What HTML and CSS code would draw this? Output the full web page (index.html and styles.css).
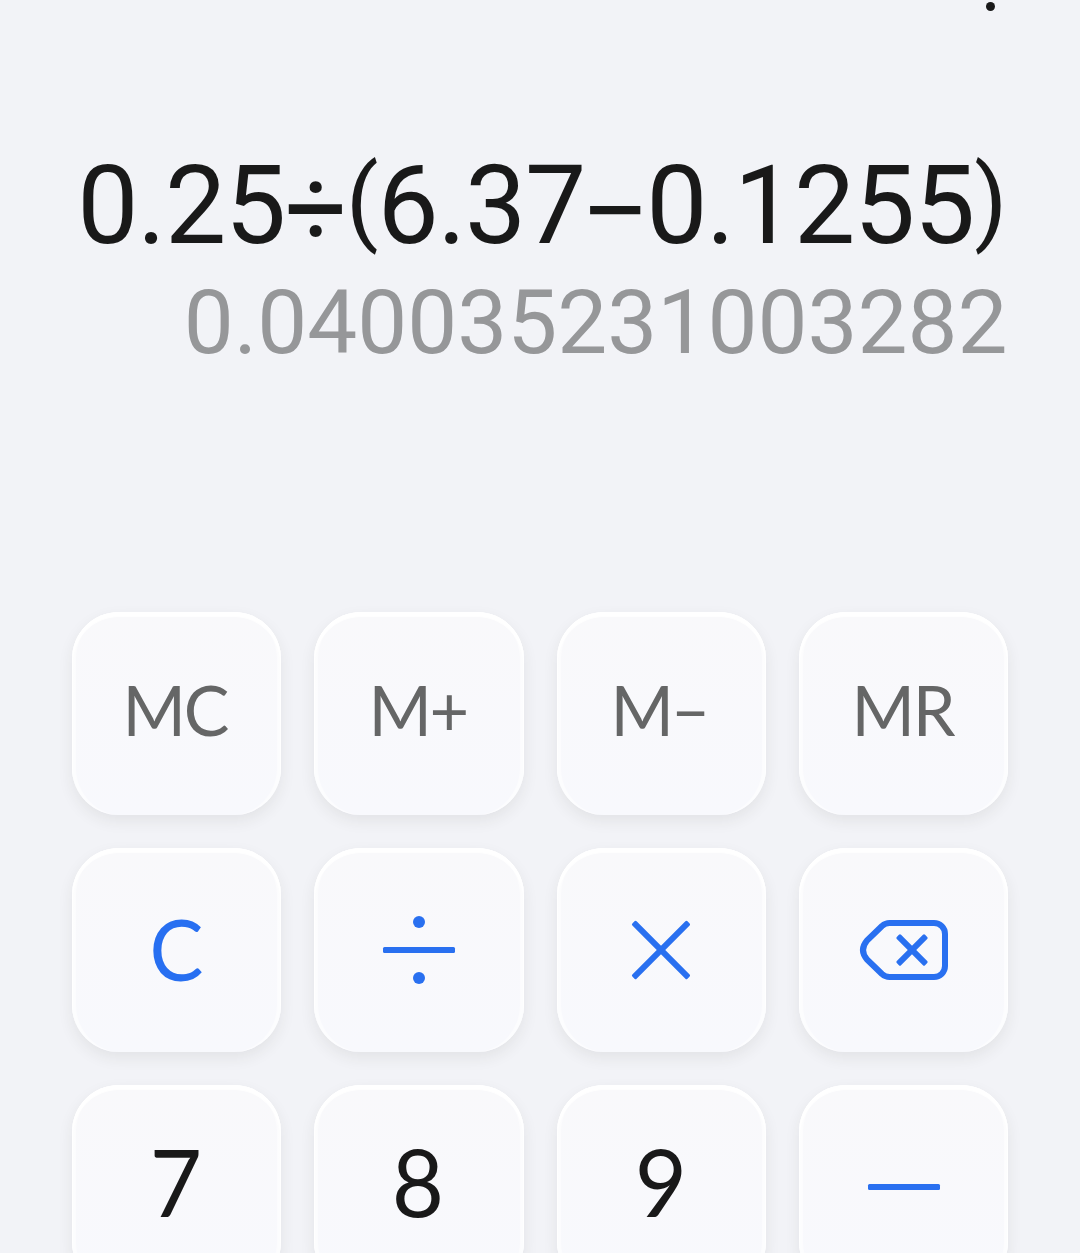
FILE: index.html
```html
<!DOCTYPE html>
<html lang="en">
<head>
<meta charset="utf-8">
<title>Calculator</title>
<link rel="stylesheet" href="styles.css">
</head>
<body>
<main class="calculator">
  <section class="display">
    <div class="history"><span class="history-dot"></span></div>
    <div class="expression">0.25<span class="divide">÷</span><span class="paren open">(</span>6.37<span class="minus">−</span>0.1255<span class="paren close">)</span></div>
    <div class="result">0.040035231003282</div>
  </section>
  <section class="keypad">
    <button class="key memory"><span class="label">MC</span></button>
    <button class="key memory"><span class="label">M+</span></button>
    <button class="key memory"><span class="label">M<span class="dash">–</span></span></button>
    <button class="key memory"><span class="label">MR</span></button>
    <button class="key clear"><span class="label">C</span></button>
    <button class="key operator" aria-label="Divide">
      <svg class="icon" viewBox="0 0 96 96"><rect x="12" y="45" width="72" height="6" rx="1.5"/><circle cx="48" cy="20" r="6"/><circle cx="48" cy="76" r="6"/></svg>
    </button>
    <button class="key operator" aria-label="Multiply">
      <svg class="icon" viewBox="0 0 96 96"><g transform="rotate(45 48 48)"><rect x="9" y="45" width="78" height="6" rx="1.5"/><rect x="45" y="9" width="6" height="78" rx="1.5"/></g></svg>
    </button>
    <button class="key operator" aria-label="Backspace">
      <svg class="icon" viewBox="0 0 96 96"><path class="outline" d="M34.500 21H79A11 11 0 0 1 90 32V64A11 11 0 0 1 79 75H34.500Q30.500 75 27 72L12 57.500Q4 48 12 38.500L27 24Q30.500 21 34.500 21Z"/><g transform="rotate(45 57 48)"><rect x="37" y="45" width="40" height="6" rx="1.5"/><rect x="54" y="28" width="6" height="40" rx="1.5"/></g></svg>
    </button>
    <button class="key digit"><span class="label">7</span></button>
    <button class="key digit"><span class="label">8</span></button>
    <button class="key digit"><span class="label">9</span></button>
    <button class="key operator" aria-label="Subtract">
      <svg class="icon" viewBox="0 0 96 96"><rect x="13" y="45" width="72" height="6" rx="1.5"/></svg>
    </button>
  </section>
</main>
</body>
</html>
```
FILE: styles.css
```css
* { box-sizing: border-box; }
body { margin: 0; background: #f2f3f7; }
.calculator {
  height: 1253px;
  overflow: hidden;
  padding: 0 72px;
  display: flex;
  flex-direction: column;
}
.display {
  flex: 0 0 611.5px;
  display: flex;
  flex-direction: column;
  align-items: flex-end;
  font-family: Roboto, sans-serif;
  white-space: nowrap;
}
.history { height: 151px; padding: 2px 13px 0 0; }
.history-dot { display: block; width: 9px; height: 9px; border-radius: 50%; background: #191919; }
.expression {
  height: 126.5px;
  padding-right: 2px;
  font-size: 109px;
  line-height: 110.5px;
  letter-spacing: -1.2px;
  color: #191919;
}
.divide, .minus, .paren { display: inline-block; line-height: 1; }
.divide { transform: translateY(3px); }
.minus { transform: translate(-1px, 6px) scaleX(1.13); }
.paren { transform: translateY(-10px); font-size: 95px; }
.result {
  font-size: 89px;
  line-height: 90px;
  padding-right: 0.5px;
  color: #969799;
}
.keypad {
  display: grid;
  grid-template-columns: repeat(4, 1fr);
  grid-auto-rows: 203.7px;
  gap: 33px;
}
.key {
  display: flex;
  align-items: center;
  justify-content: center;
  border: 0;
  padding: 0;
  border-radius: 47px;
  background: linear-gradient(#f9f9fb, #f8f9fd);
  box-shadow: inset 0 5px 1px -1px #fff, inset 0 4px 0 1px rgba(255, 255, 255, .8), inset 5px 0 1px -1px rgba(255, 255, 255, .6), inset -5px 0 1px -1px rgba(255, 255, 255, .6), 0 6px 15px rgba(50, 50, 40, .08);
  font-family: Lato, sans-serif;
}
.label { line-height: 1.2; }
.memory { font-size: 70.5px; letter-spacing: -2.5px; color: #656666; padding: 0 3px 8px 0; }
.memory .label { transform: scaleX(.97); }
.dash { position: relative; top: -2px; left: -1px; }
.clear { font-size: 85px; color: #276ff1; padding: 0 1px 5px 0; }
.clear .label { transform: scaleX(.95); }
.digit { font-size: 93px; color: #191919; padding: 0 1px 9px 0; }
.digit .label { transform: scaleX(.97); }
.icon { width: 96px; height: 96px; fill: #2970f0; }
.outline { fill: none; stroke: #2970f0; stroke-width: 6; stroke-linejoin: round; }
```
